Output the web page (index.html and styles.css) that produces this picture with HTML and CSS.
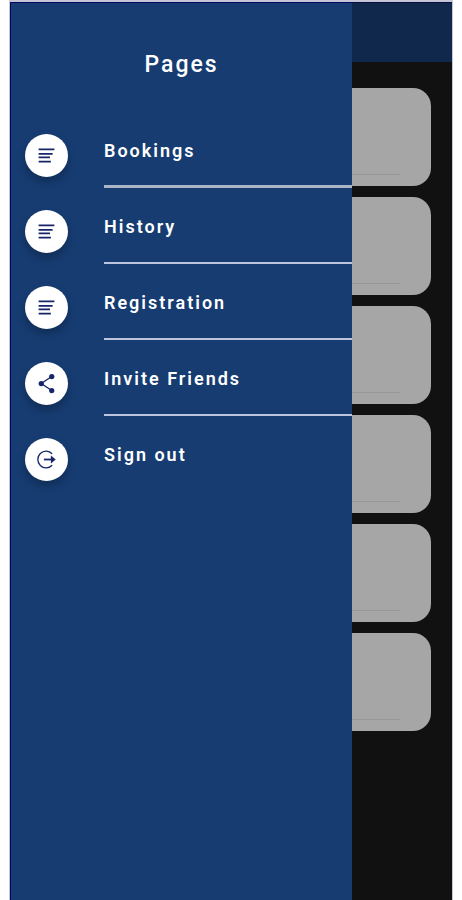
FILE: index.html
```html
<!DOCTYPE html>
<html lang="en">
<head>
  <meta charset="UTF-8" />
  <meta name="viewport" content="width=device-width, initial-scale=1" />
  <title>Pages</title>
  <link rel="stylesheet" href="styles.css">
</head>
<body>

  <div class="app">
    <!-- dimmed screen behind the drawer -->
    <div class="screen">
      <header class="topbar"></header>
      <main class="cards">
        <div class="card"></div>
        <div class="card"></div>
        <div class="card"></div>
        <div class="card"></div>
        <div class="card"></div>
        <div class="card"></div>
      </main>
    </div>

    <nav class="drawer" aria-labelledby="drawer-title">
      <h1 class="drawer-title" id="drawer-title">Pages</h1>
      <ul class="menu">
        <li>
          <a href="#bookings" class="menu-link">
            <span class="menu-icon">
              <svg viewBox="0 0 24 24" aria-hidden="true"><path d="M3 5h18M3 10h16M3 14h13M3 19h14" /></svg>
            </span>
            <span class="menu-label first">Bookings</span>
          </a>
        </li>
        <li>
          <a href="#history" class="menu-link">
            <span class="menu-icon">
              <svg viewBox="0 0 24 24" aria-hidden="true"><path d="M3 5h18M3 10h16M3 14h13M3 19h14" /></svg>
            </span>
            <span class="menu-label">History</span>
          </a>
        </li>
        <li>
          <a href="#registration" class="menu-link">
            <span class="menu-icon">
              <svg viewBox="0 0 24 24" aria-hidden="true"><path d="M3 5h18M3 10h16M3 14h13M3 19h14" /></svg>
            </span>
            <span class="menu-label">Registration</span>
          </a>
        </li>
        <li>
          <a href="#invite" class="menu-link">
            <span class="menu-icon">
              <svg viewBox="0 0 24 24" aria-hidden="true">
                <path class="thin" d="M18 4L6 12l12 8" />
                <circle cx="18" cy="4" r="3" />
                <circle cx="6" cy="12" r="3" />
                <circle cx="18" cy="20" r="3" />
              </svg>
            </span>
            <span class="menu-label">Invite Friends</span>
          </a>
        </li>
        <li>
          <a href="#signout" class="menu-link">
            <span class="menu-icon">
              <svg viewBox="0 0 24 24" aria-hidden="true">
                <path class="thin" d="M18.500 5.500A9.500 9.500 0 1 0 18.500 18.500" />
                <path d="M9 12h10" />
                <path class="head" d="M17 7.500L22.500 12L17 16.500z" />
              </svg>
            </span>
            <span class="menu-label">Sign out</span>
          </a>
        </li>
      </ul>
    </nav>
  </div>

</body>
</html>
```

FILE: styles.css
```css
* {
  box-sizing: border-box;
}
body {
  margin: 0;
  background: #fff;
  font-family: Roboto, "Liberation Sans", sans-serif;
  color: #fff;
}

/* app frame */
.app {
  position: relative;
  min-height: 100vh;
  margin: 0 9px;
  border: 1px solid #c5c5d8;
  border-width: 2px 1px 0;
  background: #111;
}

/* dimmed screen */
.topbar {
  height: 60px;
  background: #10284b;
  border-top: 1px solid #050c40;
}
.cards {
  display: flex;
  flex-direction: column;
  gap: 11px;
  padding: 26px 21px;
}
.card {
  height: 98px;
  padding: 86px 31px 0;
  border-radius: 18px;
  background: #a6a6a6;
}
.card::before {
  content: "";
  display: block;
  height: 1px;
  background: #979797;
}

/* drawer */
.drawer {
  position: absolute;
  top: 0;
  bottom: 0;
  left: 0;
  width: 77.4%;
  padding-top: 48px;
  background: #163c72;
  border-top: 1px solid #050560;
  border-left: 1px solid #050560;
}
.drawer-title {
  margin: 0 0 34px;
  font-size: 23px;
  line-height: 27px;
  font-weight: 500;
  letter-spacing: 2px;
  text-align: center;
}

/* menu */
.menu {
  margin: 0;
  padding: 0;
  list-style: none;
}
.menu-link {
  display: flex;
  align-items: flex-start;
  gap: 36px;
  padding-left: 14px;
  color: #fff;
  text-decoration: none;
}
.menu-icon {
  display: flex;
  align-items: center;
  justify-content: center;
  width: 43px;
  height: 43px;
  margin-top: 22px;
  border-radius: 50%;
  background: #fff;
  box-shadow: 0 5px 8px rgba(0, 0, 0, 0.25);
}
.menu-icon svg {
  width: 21px;
  height: 21px;
  fill: none;
  stroke: #16246a;
  stroke-width: 2;
}
.menu-icon .thin {
  stroke-width: 1.5;
}
.menu-icon circle,
.menu-icon .head {
  fill: #16246a;
  stroke: none;
}
.menu-label {
  flex: 1;
  height: 76px;
  padding-top: 29px;
  border-bottom: 2px solid #bcc4de;
  font-size: 18px;
  line-height: 20px;
  font-weight: 600;
  letter-spacing: 2px;
}
.menu-label.first {
  border-bottom: 3px solid #a9b5c6;
}
.menu li:last-child .menu-label {
  border-bottom: none;
}
```
